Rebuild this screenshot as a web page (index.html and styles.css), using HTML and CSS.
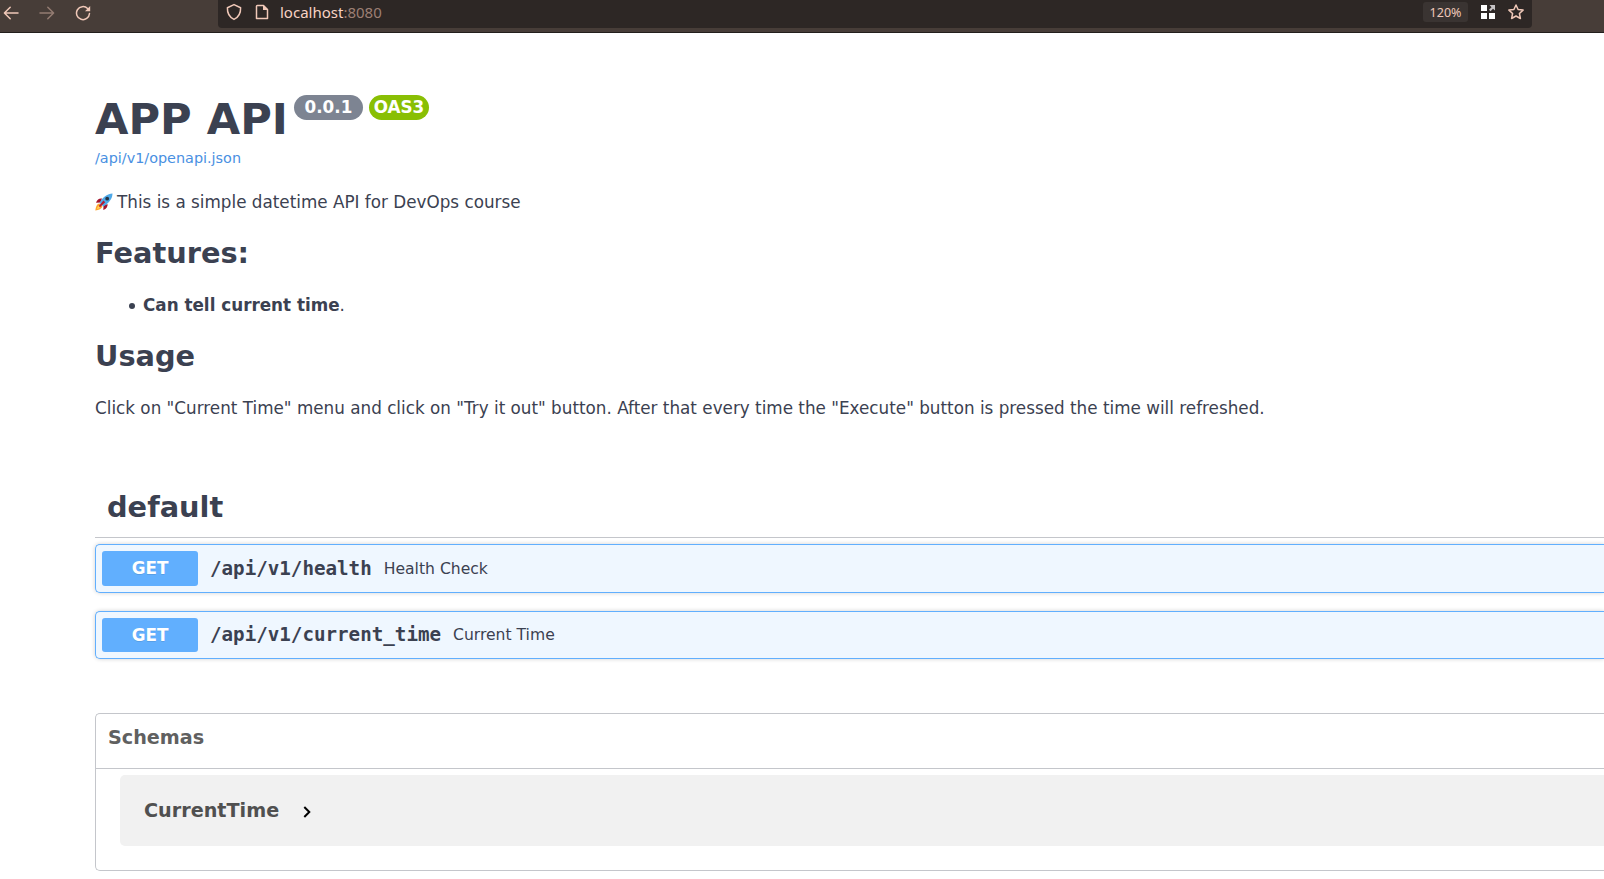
FILE: index.html
```html
<!DOCTYPE html>
<html lang="en">
<head>
<meta charset="utf-8">
<title>APP API</title>
<link rel="stylesheet" href="styles.css">
</head>
<body>
<header class="toolbar">
  <nav class="nav">
    <svg width="16" height="16" viewBox="0 0 16 16"><path d="M15 8H1.5M7.2 2.2 1.4 8l5.8 5.8"/></svg>
    <svg class="dim" width="16" height="16" viewBox="0 0 16 16"><path d="M1 8h13.500M8.800 2.200 14.600 8l-5.800 5.800"/></svg>
    <svg width="16" height="16" viewBox="0 0 16 16"><path d="M14.500 8.500A6.500 6.500 0 1 1 12.600 3.500L14 5"/><path class="solid" d="M15.200 1v5.200H10z"/></svg>
  </nav>
  <div class="address">
    <svg width="16" height="18" viewBox="0 0 16 18"><path d="M8 1.600 14.600 4.700C14.800 9.600 12.400 14.200 8 16.400 3.600 14.200 1.200 9.600 1.400 4.700z"/></svg>
    <svg class="page-icon" width="14" height="16" viewBox="0 0 14 16"><path d="M2.300 1.500H8.500L12.500 5.500V14.500H1.500V2.300Q1.500 1.500 2.300 1.500z"/><path class="solid" d="M8 1v5h5z"/></svg>
    <span class="url">localhost<span class="port">:8080</span></span>
    <span class="zoom">120%</span>
    <svg class="grid-icon" width="14" height="14" viewBox="0 0 14 14"><path d="M0 0h6v6H0zM0 8h6v6H0zM8 8h6v6H8z"/><path class="arrow" d="M8.500 0H14V5.500L12 3.700 9.500 6.200 8 4.700 10.500 2.200z"/></svg>
    <svg width="16" height="16" viewBox="0 0 16 16"><path d="M8 1 10.100 5.500 15.100 6.100 11.400 9.500 12.400 14.500 8 12 3.600 14.500 4.600 9.500.900 6.100 5.900 5.500z"/></svg>
  </div>
</header>
<main class="content">
  <section class="info">
    <div class="title-row"><h1 class="title">APP API</h1><span class="badge version">0.0.1</span><span class="badge oas">OAS3</span></div>
    <a class="spec-link">/api/v1/openapi.json</a>
    <p class="text intro">
      <svg class="rocket" width="18" height="18" viewBox="0 0 18 18">
        <path fill="#ffa52e" d="M4.500 10.500C1.500 11 .800 14 .300 17.500 4 17 6.500 16 7.500 13.500z"/>
        <path fill="#ffd45a" d="M4.500 12.500C3 13 2.200 14.500 2 16 3.700 15.700 5 15 5.500 13.500z"/>
        <path fill="#a3132d" d="M7 5.500C4.500 5 2 6.500 1 9.800L5.500 9.500zM12.500 11C13 13.500 11.500 16 8.300 17L8.500 12.500z"/>
        <path fill="#4fa9e8" d="M17.500.500C12.500.500 8 4 4.500 9.700L8.300 13.500C14 10 17.500 5.500 17.500.500z"/>
        <path fill="#b51b35" d="M8.500 7.500 10.200 9.300 5 14.200 3.800 13z"/>
        <circle cx="12.200" cy="5.700" r="1.900" fill="#263445"/>
      </svg><span>This is a simple datetime API for DevOps course</span>
    </p>
    <h2 class="heading">Features:</h2>
    <ul class="features text"><li><strong>Can tell current time</strong>.</li></ul>
    <h2 class="heading">Usage</h2>
    <p class="text usage">Click on "Current Time" menu and click on "Try it out" button. After that every time the "Execute" button is pressed the time will refreshed.</p>
  </section>
  <section class="operations">
    <h2 class="heading tag">default</h2>
    <div class="op op-tall"><span class="method">GET</span><span class="path">/api/v1/health</span><span class="summary">Health Check</span></div>
    <div class="op"><span class="method">GET</span><span class="path">/api/v1/current_time</span><span class="summary">Current Time</span></div>
  </section>
  <section class="schemas">
    <h3 class="schemas-title">Schemas</h3>
    <div class="model"><span>CurrentTime</span><svg width="8" height="12" viewBox="0 0 8 12"><path d="M1.300 1 6.300 6 1.300 11"/></svg></div>
  </section>
</main>
</body>
</html>
```
FILE: styles.css
```css
* { box-sizing: border-box; }
body { margin: 0; height: 879px; overflow: hidden; background: #fff; color: #3b4151; font-family: "DejaVu Sans", sans-serif; }
h1, h2, h3, p, ul { margin: 0; padding: 0; }
svg { display: block; flex: none; }

.toolbar { display: flex; height: 33px; background: #473d38; border-bottom: 1px solid #231f1d; padding-right: 72px; }
.toolbar svg { fill: none; stroke: #f0c8b8; stroke-width: 1.5; stroke-linejoin: round; stroke-linecap: round; }
.toolbar .solid { fill: #f0c8b8; stroke: none; }
.nav { display: flex; gap: 20px; padding: 5px 0 0 3px; width: 218px; }
.nav .dim { opacity: .45; }
.address { display: flex; align-items: center; flex: 1; height: 28px; padding: 0 8px 4px 8px; background: #2d2725; border-radius: 0 0 4px 4px; }
.page-icon { margin-left: 13px; }
.url { margin-left: 11px; font: 15px/20px "Noto Sans", sans-serif; color: #f8d3c4; }
.port { color: #9c7f74; }
.zoom { margin-left: auto; width: 45px; height: 20px; border-radius: 3px; background: #3a3432; color: #efc8b9; font: 12.500px/21px "Noto Sans", sans-serif; text-align: center; }
.toolbar .grid-icon { margin: 0 13px; fill: #fff; stroke: none; }
.toolbar .grid-icon .arrow { fill: #c6c3c5; }

.content { padding: 61px 0 0 95px; }
.title-row { display: flex; height: 50px; align-items: flex-start; }
.title { font-size: 43.200px; line-height: 50px; }
.badge { height: 25px; margin-top: 1px; border-radius: 13px; color: #fff; font-size: 16.800px; font-weight: 700; line-height: 24px; text-align: center; }
.version { width: 69px; margin-left: 6px; background: #7d8492; }
.oas { width: 60px; margin-left: 6px; background: #89bf04; }
.spec-link { display: block; margin-top: 4px; font-size: 14.400px; line-height: 20px; color: #4990e2; }
.text { font-size: 16.800px; line-height: 24px; letter-spacing: .006px; }
.intro { display: flex; align-items: center; gap: 4px; margin: 22px 0; }
.rocket { margin-top: -1px; }
.heading { font-size: 28.800px; line-height: 34px; }
.features { margin: 23px 0 22px; padding-left: 48px; list-style: none; }
.features li::before { content: ""; display: inline-block; width: 6px; height: 6px; margin: 0 8.500px 0 -14.500px; border-radius: 50%; background: #3b4151; vertical-align: 2px; }
.usage { margin-top: 23px; }

.operations { margin-top: 70px; }
.tag { height: 48px; padding-left: 12px; border-bottom: 1px solid #c4c6cb; margin-bottom: 6px; }
.op { display: flex; align-items: center; height: 48px; padding: 0 6px; margin-bottom: 18px; border: 1px solid #61affe; border-right: 0; border-radius: 5px 0 0 5px; background: #eff7ff; box-shadow: 0 0 4px rgba(0, 0, 0, .19); }
.op-tall { height: 49px; }
.method { width: 96px; height: 34px; border-radius: 3px; background: #61affe; color: #fff; font-size: 16.800px; font-weight: 700; line-height: 34px; text-align: center; text-shadow: 0 1px 0 rgba(0, 0, 0, .1); }
.op-tall .method { height: 35px; line-height: 35px; }
.path { margin-left: 12px; font: 700 19.200px/24px "DejaVu Sans Mono", monospace; }
.summary { margin-left: 12px; font-size: 15.600px; line-height: 24px; }

.schemas { height: 158px; margin-top: 54px; border: 1px solid #c4c6cb; border-right: 0; border-radius: 5px 0 0 5px; }
.schemas-title { height: 55px; padding: 12px 0 0 12px; border-bottom: 1px solid #c4c6cb; color: #606060; font-size: 19.200px; line-height: 24px; }
.model { display: flex; align-items: center; gap: 24px; height: 71px; margin: 6px 0 0 24px; padding-left: 24px; border-radius: 5px 0 0 5px; background: #f1f1f1; color: #505050; font-size: 19.200px; font-weight: 700; }
.model svg { margin-top: 3px; fill: none; stroke: #000; stroke-width: 2; }
```
